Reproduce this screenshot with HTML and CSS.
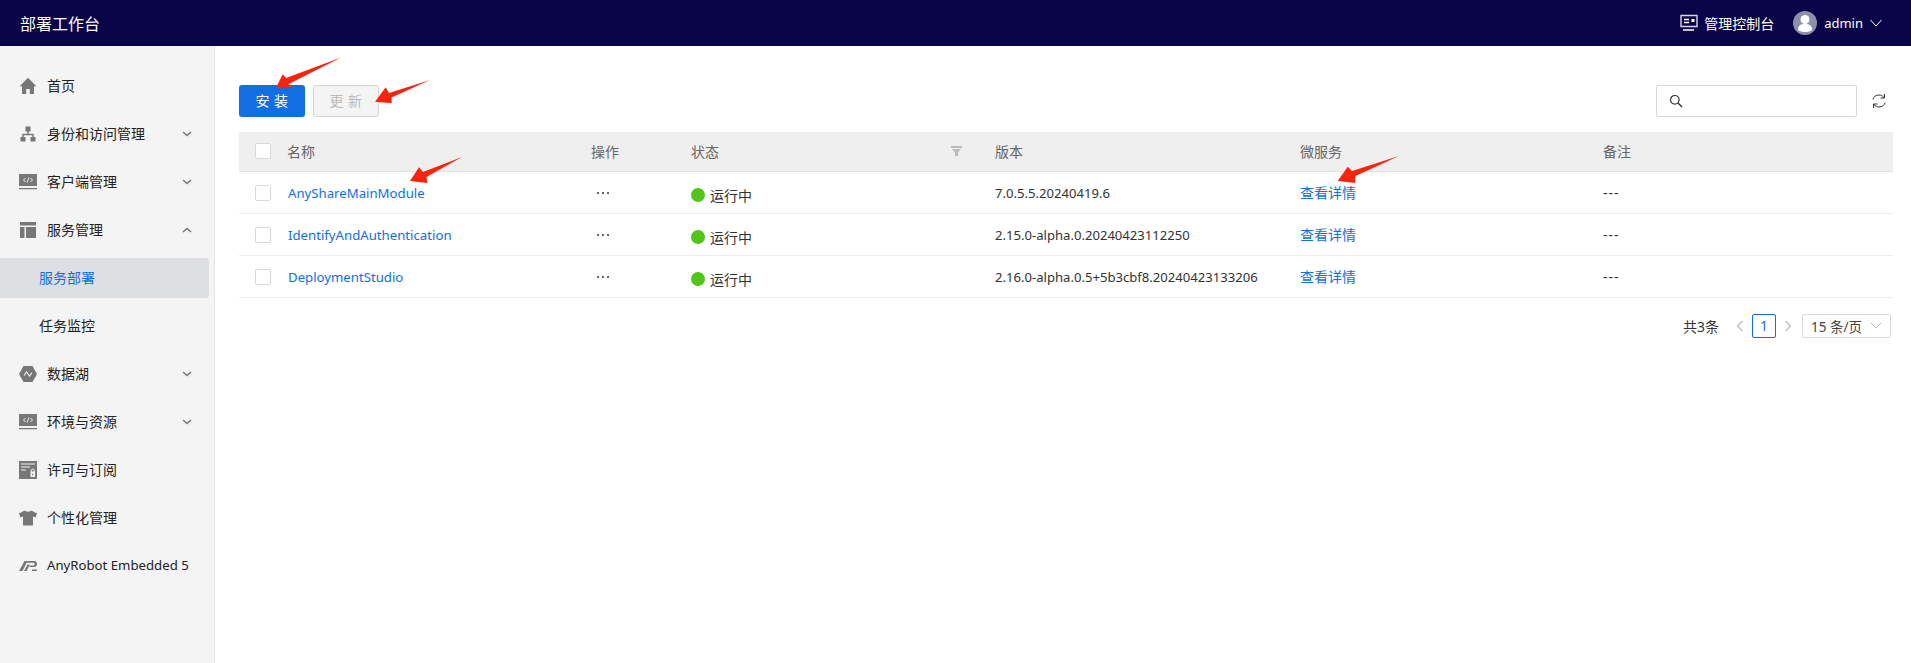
FILE: index.html
```html
<!DOCTYPE html>
<html lang="zh-CN">
<head>
    <meta charset="UTF-8">
    <meta name="viewport" content="width=device-width, initial-scale=1.0">
    <title>部署工作台</title>
    <link rel="stylesheet" href="styles.css">
</head>
<body>
    <header class="topbar">
        <div class="topbar-title">部署工作台</div>
        <div class="topbar-right">
            <a class="console-link">
                <svg width="18" height="18" viewBox="0 0 18 18"><path d="M1 1.500h16v11H1z" fill="none" stroke="#d8d8e4" stroke-width="1.400"/><path d="M4 5.500h5M4 8.500h5M3 16h11" stroke="#fff" stroke-width="1.300"/><path d="M11.500 5h3v3h-3z" fill="#fff"/></svg>
                管理控制台
            </a>
            <div class="user">
                <svg width="24" height="24" viewBox="0 0 24 24"><circle cx="12" cy="12" r="12" fill="#8d90a8"/><circle cx="12" cy="8.500" r="4.500" fill="#fff"/><path d="M5 19c0-5 3-6 7-6s7 1 7 6c-2 1.600-4.500 2-7 2s-5-.4-7-2z" fill="#fff"/></svg>
                <span>admin</span>
                <svg width="12" height="8" viewBox="0 0 12 8"><path d="M.5 1l5.500 6 5.500-6" fill="none" stroke="#fff" stroke-width="1"/></svg>
            </div>
        </div>
    </header>

    <div class="layout">
        <nav class="sidebar">
            <div class="menu-item">
                <svg class="menu-icon" viewBox="0 0 18 18"><path d="M9 .8L.6 9.200h2.400V17h4.200v-5h3.600v5H15V9.200h2.400z"/></svg>
                <span>首页</span>
            </div>
            <div class="menu-item">
                <svg class="menu-icon" viewBox="0 0 18 18"><path d="M6.500 1.500h5v5h-5zM1.500 12h5v4.500h-5zM11.500 12h5v4.500h-5z"/><path d="M9 6v3.500M4 12V9.500h10V12" fill="none" stroke="#777" stroke-width="1.400"/></svg>
                <span>身份和访问管理</span>
                <svg class="chevron" viewBox="0 0 10 6"><path d="M1 1l4 3.500L9 1"/></svg>
            </div>
            <div class="menu-item">
                <svg class="menu-icon" viewBox="0 0 18 18"><path d="M0 1h18v12H0zM0 15h18v1.200H0z"/><path d="M6.500 5L4.500 7l2 2M11.500 5l2 2-2 2M10 4.500L8 9.500" fill="none" stroke="#f4f4f4" stroke-width="1"/></svg>
                <span>客户端管理</span>
                <svg class="chevron" viewBox="0 0 10 6"><path d="M1 1l4 3.500L9 1"/></svg>
            </div>
            <div class="menu-item">
                <svg class="menu-icon" viewBox="0 0 18 18"><path d="M1 1h16v3.500H1zM1 6h4.500v11H1zM7 6h10v11H7z"/></svg>
                <span>服务管理</span>
                <svg class="chevron" viewBox="0 0 10 6"><path d="M1 5l4-3.500L9 5"/></svg>
            </div>
            <div class="menu-item sub active"><span>服务部署</span></div>
            <div class="menu-item sub"><span>任务监控</span></div>
            <div class="menu-item">
                <svg class="menu-icon" viewBox="0 0 18 18"><path d="M4.500 1h9L18 9l-4.500 8h-9L0 9z"/><path d="M5 10.500L7.500 7l3 4L13 7.500" fill="none" stroke="#f4f4f4" stroke-width="1.100"/></svg>
                <span>数据湖</span>
                <svg class="chevron" viewBox="0 0 10 6"><path d="M1 1l4 3.500L9 1"/></svg>
            </div>
            <div class="menu-item">
                <svg class="menu-icon" viewBox="0 0 18 18"><path d="M0 1h18v12H0zM0 15h18v1.200H0z"/><path d="M6.500 5L4.500 7l2 2M11.500 5l2 2-2 2M10 4.500L8 9.500" fill="none" stroke="#f4f4f4" stroke-width="1"/></svg>
                <span>环境与资源</span>
                <svg class="chevron" viewBox="0 0 10 6"><path d="M1 1l4 3.500L9 1"/></svg>
            </div>
            <div class="menu-item">
                <svg class="menu-icon" viewBox="0 0 18 18"><path d="M0 0h18v18H0z"/><path d="M2 3h14M2 6h9M2 9h5" stroke="#f4f4f4" stroke-width="1.200"/><path d="M11.500 10.500h4.500V16h-4.500z" fill="#f4f4f4"/><circle cx="13.700" cy="9.800" r="1.700" fill="none" stroke="#f4f4f4"/><path d="M13.700 12.500v2" stroke="#777"/></svg>
                <span>许可与订阅</span>
            </div>
            <div class="menu-item">
                <svg class="menu-icon" viewBox="0 0 18 18"><path d="M5.500 1.500C7 3 11 3 12.500 1.500L18 4.500l-1.500 4-2.500-1V16.500H4V7.500l-2.500 1L0 4.500z"/></svg>
                <span>个性化管理</span>
            </div>
            <div class="menu-item">
                <svg class="menu-icon" viewBox="0 0 18 18"><path d="M0 14L5.500 4h3L3.500 14zM5 14l3.500-6.500h2.200L7.700 14z"/><path d="M8 4h7c2 0 3 1.200 3 3s-1 3-3 3h-4.500V8.500h4c.8 0 1.200-.6 1.200-1.400s-.4-1.400-1.200-1.400H7.500zM13 12.500h5V14h-5z"/></svg>
                <span class="latin">AnyRobot Embedded 5</span>
            </div>
        </nav>

        <main class="content">
            <div class="toolbar">
                <button class="btn btn-primary">安 装</button>
                <button class="btn btn-disabled">更 新</button>
                <div class="toolbar-right">
                    <div class="search">
                        <svg width="14" height="14" viewBox="0 0 14 14"><circle cx="5.800" cy="5.800" r="4.300" fill="none" stroke="#333" stroke-width="1.200"/><path d="M9 9l4 4" stroke="#333" stroke-width="1.400"/></svg>
                    </div>
                    <svg class="refresh" width="14" height="16" viewBox="0 0 14 16"><path d="M1 6.500C1.500 3.500 4 2 7 2c2 0 3.500.8 5 2.500M12.500 1v4h-4M13 9.500C12.500 12.500 10 14 7 14c-2 0-3.500-.8-5-2.500M1.500 15v-4h4" fill="none" stroke="#333" stroke-width="1"/></svg>
                </div>
            </div>

            <table class="service-table">
                <colgroup>
                    <col class="col-check"><col class="col-name"><col class="col-op"><col class="col-status"><col class="col-version"><col class="col-micro"><col>
                </colgroup>
                <thead>
                    <tr>
                        <th><span class="checkbox"></span></th>
                        <th>名称</th>
                        <th>操作</th>
                        <th>
                            <div class="status-head">状态
                                <svg width="11" height="10" viewBox="0 0 11 10"><path d="M0 0h11v2H0zM1 3h9L7 6.500V10H4V6.500z" fill="#bbb"/></svg>
                            </div>
                        </th>
                        <th>版本</th>
                        <th>微服务</th>
                        <th>备注</th>
                    </tr>
                </thead>
                <tbody>
                    <tr>
                        <td><span class="checkbox"></span></td>
                        <td><a class="link latin link-name">AnyShareMainModule</a></td>
                        <td><svg class="more" width="14" height="4" viewBox="0 0 14 4"><circle cx="2" cy="2" r="1"/><circle cx="7" cy="2" r="1"/><circle cx="12" cy="2" r="1"/></svg></td>
                        <td><div class="status"><i class="dot"></i>运行中</div></td>
                        <td class="version">7.0.5.5.20240419.6</td>
                        <td class="micro"><a class="link">查看详情</a></td>
                        <td class="none">---</td>
                    </tr>
                    <tr>
                        <td><span class="checkbox"></span></td>
                        <td><a class="link latin link-name">IdentifyAndAuthentication</a></td>
                        <td><svg class="more" width="14" height="4" viewBox="0 0 14 4"><circle cx="2" cy="2" r="1"/><circle cx="7" cy="2" r="1"/><circle cx="12" cy="2" r="1"/></svg></td>
                        <td><div class="status"><i class="dot"></i>运行中</div></td>
                        <td class="version">2.15.0-alpha.0.20240423112250</td>
                        <td class="micro"><a class="link">查看详情</a></td>
                        <td class="none">---</td>
                    </tr>
                    <tr>
                        <td><span class="checkbox"></span></td>
                        <td><a class="link latin link-name">DeploymentStudio</a></td>
                        <td><svg class="more" width="14" height="4" viewBox="0 0 14 4"><circle cx="2" cy="2" r="1"/><circle cx="7" cy="2" r="1"/><circle cx="12" cy="2" r="1"/></svg></td>
                        <td><div class="status"><i class="dot"></i>运行中</div></td>
                        <td class="version">2.16.0-alpha.0.5+5b3cbf8.20240423133206</td>
                        <td class="micro"><a class="link">查看详情</a></td>
                        <td class="none">---</td>
                    </tr>
                </tbody>
            </table>

            <div class="pagination">
                <span class="total">共3条</span>
                <svg class="page-arrow" width="8" height="12" viewBox="0 0 8 12"><path d="M6.500 1L1.500 6l5 5"/></svg>
                <span class="page-num">1</span>
                <svg class="page-arrow" width="8" height="12" viewBox="0 0 8 12"><path d="M1.500 1l5 5-5 5"/></svg>
                <div class="page-size">15 条/页
                    <svg width="12" height="7" viewBox="0 0 12 7"><path d="M1 1l5 5 5-5" fill="none" stroke="#bbb"/></svg>
                </div>
            </div>
        </main>
    </div>

    <!-- annotation arrows drawn on top of the screenshot -->
    <svg class="arrows" width="1911" height="663" viewBox="0 0 1911 663">
        <path d="M341 57.500L286 78L282.700 74.300L275.700 88.300L292.700 88L288.300 84.300z"/>
        <path d="M430 80L389 93L385.700 87.300L375 101.700L391.700 103.300L391.500 97.500z"/>
        <path d="M462 157L423 172L419 167.300L410 181L427.300 183L426.500 177z"/>
        <path d="M1399 156L1352 171L1347.700 166.700L1337.700 181L1355 183L1355.500 176z"/>
    </svg>
</body>
</html>
```

FILE: styles.css
```css
* {
    box-sizing: border-box;
}

body {
    margin: 0;
    font-family: "Noto Sans", "Noto Sans CJK SC", sans-serif;
    font-size: 14px;
    color: #333;
    background-color: #fff;
    height: 663px;
    overflow: hidden;
    position: relative;
}

.latin {
    font-size: 13.200px;
}

.topbar {
    height: 46px;
    background-color: #0a0548;
    color: #fff;
    display: flex;
    align-items: center;
    justify-content: space-between;
    padding: 0 29px 0 20px;
}

.topbar-title {
    font-size: 16px;
}

.topbar-right {
    display: flex;
    align-items: center;
    gap: 19px;
}

.console-link {
    display: flex;
    align-items: center;
    gap: 6px;
}

.user {
    display: flex;
    align-items: center;
    gap: 7px;
    font-size: 13px;
}

.layout {
    display: flex;
    height: 617px;
}

.sidebar {
    width: 215px;
    flex: none;
    background-color: #f4f4f4;
    border-right: 1px solid #e4e4e4;
    padding: 20px 5px 0 0;
    display: flex;
    flex-direction: column;
    gap: 8px;
}

.menu-item {
    height: 40px;
    display: flex;
    align-items: center;
    padding-left: 19px;
    color: #222;
    white-space: nowrap;
    position: relative;
}

.menu-item span {
    margin-bottom: 2px;
}

.menu-item.sub {
    padding-left: 39px;
    border-radius: 0 3px 3px 0;
}

.menu-item.active {
    background-color: #dedfe3;
    color: #126ee3;
}

.menu-icon {
    width: 18px;
    height: 18px;
    margin-right: 10px;
    fill: #777;
}

.chevron {
    width: 10px;
    height: 6px;
    position: absolute;
    left: 182px;
    fill: none;
    stroke: #777;
    stroke-width: 1.600;
}

.content {
    flex: 1;
    padding: 39px 18px 0 24px;
}

.toolbar {
    display: flex;
    align-items: center;
    gap: 8px;
    height: 32px;
    margin-bottom: 15px;
}

.btn {
    width: 66px;
    height: 32px;
    border-radius: 3px;
    font-family: inherit;
    font-size: 14px;
    letter-spacing: .5px;
    border: 1px solid transparent;
    padding: 0 0 2px;
}

.btn-primary {
    background-color: #126ee3;
    color: #fff;
}

.btn-disabled {
    background-color: #f4f4f4;
    border-color: #d4d4d4;
    color: #bbb;
}

.toolbar-right {
    margin-left: auto;
    display: flex;
    align-items: center;
    gap: 15px;
    padding-right: 7px;
}

.search {
    width: 201px;
    height: 32px;
    border: 1px solid #d9d9d9;
    border-radius: 2px;
    display: flex;
    align-items: center;
    padding-left: 12px;
}

.service-table {
    width: 100%;
    border-collapse: collapse;
    table-layout: fixed;
}

.col-check { width: 48px; }
.col-name { width: 304px; }
.col-op { width: 100px; }
.col-status { width: 304px; }
.col-version { width: 305px; }
.col-micro { width: 303px; }

.service-table th {
    height: 39px;
    background-color: #efefef;
    border-bottom: 1px solid #e3e3e3;
    font-size: 14px;
    font-weight: normal;
    color: #666;
    text-align: left;
    padding: 0 0 1px;
}

.service-table td {
    height: 42px;
    border-bottom: 1px solid #ececec;
    padding: 1px 0 0;
    color: #333;
    white-space: nowrap;
}

.service-table th:first-child,
.service-table td:first-child {
    padding-left: 16px;
}

.service-table td.version {
    font-size: 13.100px;
}

.service-table td.micro {
    padding: 0 0 1px;
}

.service-table td.none {
    letter-spacing: 1px;
}

.checkbox {
    display: block;
    width: 16px;
    height: 16px;
    background-color: #fff;
    border: 1px solid #d9d9d9;
    border-radius: 2px;
}

.status-head {
    display: flex;
    align-items: center;
    justify-content: space-between;
    padding-right: 33px;
}

.link {
    color: #126ee3;
}

.link-name {
    padding-left: 1px;
}

.more {
    display: block;
    margin-left: 5px;
    fill: #333;
}

.status {
    display: flex;
    align-items: center;
    gap: 5px;
    padding-top: 5px;
}

.dot {
    width: 14px;
    height: 14px;
    border-radius: 50%;
    background-color: #52c41a;
}

.pagination {
    display: flex;
    align-items: center;
    justify-content: flex-end;
    margin-top: 16px;
    padding-right: 2px;
    height: 24px;
}

.total {
    margin-right: 17px;
}

.page-arrow {
    fill: none;
    stroke: #bbb;
    stroke-width: 1.200;
}

.page-num {
    width: 24px;
    height: 24px;
    margin: 0 8px;
    border: 1px solid #126ee3;
    border-radius: 2px;
    color: #126ee3;
    display: flex;
    align-items: center;
    justify-content: center;
}

.page-size {
    width: 89px;
    height: 24px;
    margin-left: 10px;
    border: 1px solid #d9d9d9;
    border-radius: 2px;
    display: flex;
    align-items: center;
    justify-content: space-between;
    padding: 0 8px;
    font-size: 13.500px;
    color: #444;
}

.arrows {
    position: absolute;
    top: 0;
    left: 0;
    fill: #f8240e;
    pointer-events: none;
}
```
